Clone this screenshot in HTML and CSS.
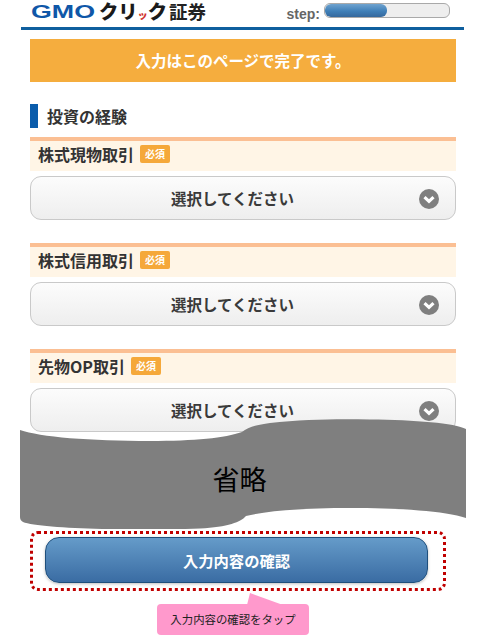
FILE: index.html
```html
<!DOCTYPE html>
<html lang="ja">
<head>
<meta charset="utf-8">
<title>投資の経験</title>
<link rel="stylesheet" href="styles.css">
</head>
<body>
<div class="page">
  <header class="header">
    <svg class="logo" width="178" height="27" viewBox="0 0 178 27">
      <text class="logo-gmo" x="0" y="18" textLength="64" lengthAdjust="spacingAndGlyphs">GMO</text>
      <text class="logo-kana" x="68" y="18.500" textLength="68" lengthAdjust="spacingAndGlyphs">クリ<tspan class="logo-red" font-size="10">ッ</tspan>ク</text>
      <text class="logo-kanji" x="138" y="18.500" textLength="37" lengthAdjust="spacingAndGlyphs">証券</text>
    </svg>
    <div class="step">
      <span class="step-label">step:</span>
      <div class="progress"><div class="progress-fill"></div></div>
    </div>
  </header>
  <main class="content">
    <div class="banner">入力はこのページで完了です。</div>
    <h2 class="heading">投資の経験</h2>

    <section class="field">
      <div class="field-title"><span>株式現物取引</span><span class="badge">必須</span></div>
      <div class="select"><span>選択してください</span>
        <svg class="chev" width="20" height="20" viewBox="0 0 20 20"><circle cx="10" cy="10" r="10" fill="#7f7f7f"/><path d="M5.500 8.200 10 12.400 14.500 8.200" fill="none" stroke="#fff" stroke-width="3.200"/></svg>
      </div>
    </section>

    <section class="field">
      <div class="field-title"><span>株式信用取引</span><span class="badge">必須</span></div>
      <div class="select"><span>選択してください</span>
        <svg class="chev" width="20" height="20" viewBox="0 0 20 20"><circle cx="10" cy="10" r="10" fill="#7f7f7f"/><path d="M5.500 8.200 10 12.400 14.500 8.200" fill="none" stroke="#fff" stroke-width="3.200"/></svg>
      </div>
    </section>

    <section class="field">
      <div class="field-title"><span>先物OP取引</span><span class="badge">必須</span></div>
      <div class="select"><span>選択してください</span>
        <svg class="chev" width="20" height="20" viewBox="0 0 20 20"><circle cx="10" cy="10" r="10" fill="#7f7f7f"/><path d="M5.500 8.200 10 12.400 14.500 8.200" fill="none" stroke="#fff" stroke-width="3.200"/></svg>
      </div>
    </section>

    <div class="omit">
      <svg class="omit-shape" width="446" height="110" viewBox="0 0 446 110">
        <path fill="#7f7f7f" d="M0 11 C20 18 70 22 130 22 C175 22 205 19 222 13 C228 8 236 6 250 4 C285 0 320 0 350 0.500 C395 1 435 4 446 10 L446 99 C425 92 380 89 330 89 C290 89 250 91 226 97 C221 103 208 108 180 109.500 C120 112 20 110 3 103 C1 102 0 100 0 98 Z"/>
      </svg>
      <span class="omit-text">省略</span>
    </div>

    <div class="cta-frame">
      <div class="cta">入力内容の確認</div>
    </div>

    <div class="callout">
      <svg class="callout-tail" width="42" height="12" viewBox="0 0 42 12"><path d="M0 12 L3 0 L36 12 Z" fill="#ff99cc"/></svg>
      入力内容の確認をタップ
    </div>
  </main>
</div>
</body>
</html>
```

FILE: styles.css
```css
* { box-sizing: border-box; }
html, body { margin: 0; padding: 0; background: #fff; }
body {
  width: 478px;
  height: 638px;
  overflow: hidden;
  font-family: "Noto Sans CJK JP", "Liberation Sans", sans-serif;
  color: #333;
}
.page { width: 443px; margin-left: 21px; }

.header {
  height: 30px;
  border-bottom: 3px solid #0f5f9e;
  display: flex;
  align-items: flex-start;
  justify-content: space-between;
  padding: 0 14px 0 10px;
}
.logo { display: block; overflow: visible; }
.logo-gmo { font: 700 19px "Liberation Sans", sans-serif; fill: #0f57a8; }
.logo-kana { font: 900 19px "Noto Sans CJK JP", sans-serif; fill: #1a1a1a; }
.logo-red { fill: #d0312d; }
.logo-kanji { font: 700 18px "Noto Sans CJK JP", sans-serif; fill: #222; }

.step { display: flex; align-items: flex-start; gap: 4px; padding-top: 2px; }
.step-label {
  font: 700 14px/16px "Liberation Sans", sans-serif;
  color: #666;
  margin-top: 4px;
}
.progress {
  width: 126px;
  height: 15px;
  margin-top: 1px;
  background: #eee;
  border: 1px solid #a9a9a9;
  border-radius: 6px;
  overflow: hidden;
}
.progress-fill {
  width: 62px;
  height: 100%;
  border-radius: 6px;
  background: linear-gradient(#6fa3cf, #3f7fb8 55%, #35689c);
}

.content { padding: 9px 8px 0 9px; }
.banner {
  height: 43px;
  background: #f5ad3e;
  color: #fff;
  font-size: 15.500px;
  font-weight: 700;
  line-height: 43px;
  text-align: center;
}
.heading {
  height: 24px;
  margin: 22px 0 0;
  padding-left: 9px;
  border-left: 8px solid #0a5cab;
  font-size: 16px;
  font-weight: 700;
  line-height: 24px;
  color: #333;
}

.field { margin-top: 9px; }
.field + .field { margin-top: 23px; }
.field-title {
  height: 34px;
  border-top: 4px solid #fbbf93;
  background: #fff5e6;
  padding: 0 0 4px 8px;
  display: flex;
  align-items: center;
  gap: 6px;
  font-size: 16px;
  font-weight: 700;
  line-height: 1;
}
.badge {
  width: 30px;
  height: 18px;
  border-radius: 2px;
  background: #f5a83a;
  color: #fff;
  font-size: 10px;
  font-weight: 700;
  line-height: 18px;
  text-align: center;
}
.select {
  height: 44px;
  margin-top: 5px;
  position: relative;
  display: flex;
  align-items: center;
  justify-content: center;
  padding-right: 21px;
  border: 1px solid #c9c9c9;
  border-radius: 11px;
  background: linear-gradient(#fcfcfc, #eeeeee);
  font-size: 15.500px;
  font-weight: 700;
  color: #3a3a3a;
}
.chev { position: absolute; right: 16px; top: 12px; }

.omit {
  position: relative;
  height: 110px;
  margin: -13px 0 0 -10px;
  width: 446px;
}
.omit-shape { position: absolute; left: 0; top: 0; display: block; }
.omit-text {
  position: absolute;
  left: 0;
  right: 0;
  top: 39px;
  padding-right: 7px;
  text-align: center;
  font-size: 27px;
  line-height: 42px;
  color: #000;
}

.cta-frame {
  width: 416px;
  height: 60px;
  margin-top: 2px;
  padding: 3px 15px 0 12px;
  border: 3px dotted #c00000;
  border-radius: 8px;
}
.cta {
  height: 46px;
  border: 1px solid #1f4f7c;
  border-radius: 14px;
  background: linear-gradient(#659bc9, #3a6ca3);
  box-shadow: 0 1px 3px rgba(0, 0, 0, 0.25);
  color: #fff;
  font-size: 15.300px;
  font-weight: 700;
  line-height: 44px;
  text-align: center;
}

.callout {
  position: relative;
  width: 152px;
  height: 31px;
  margin: 13px 0 0 127px;
  border-radius: 4px;
  background: #ff99cc;
  color: #222;
  font-size: 11.400px;
  line-height: 31px;
  text-align: center;
}
.callout-tail { position: absolute; left: 90px; top: -11px; display: block; }
```
